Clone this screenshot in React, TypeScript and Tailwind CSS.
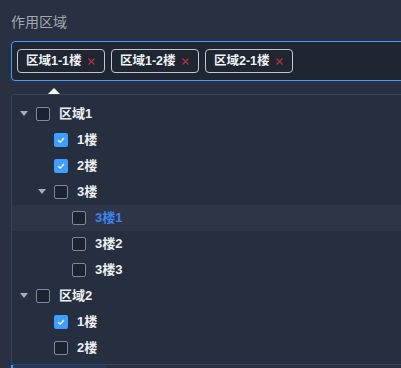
import { useState } from "react";

type Node = {
  label: string;
  level: number;
  caret?: boolean;
  checked?: boolean;
  active?: boolean;
};

const tags = ["区域1-1楼", "区域1-2楼", "区域2-1楼"];

const nodes: Node[] = [
  { label: "区域1", level: 0, caret: true },
  { label: "1楼", level: 1, checked: true },
  { label: "2楼", level: 1, checked: true },
  { label: "3楼", level: 1, caret: true },
  { label: "3楼1", level: 2, active: true },
  { label: "3楼2", level: 2 },
  { label: "3楼3", level: 2 },
  { label: "区域2", level: 0, caret: true },
  { label: "1楼", level: 1, checked: true },
  { label: "2楼", level: 1 },
];

const Checkbox = ({ checked }: { checked?: boolean }) => {
  if (checked) {
    return (
      <span className="w-[14px] h-[14px] rounded-[2px] bg-[#409eff] flex items-center justify-center shrink-0">
        <svg width="10" height="10" viewBox="0 0 10 10">
          <path d="M2 5.2 L4.2 7.2 L8 3" fill="none" stroke="#fff" strokeWidth="1.2" />
        </svg>
      </span>
    );
  }
  return (
    <span className="block w-[14px] h-[14px] rounded-[2px] border border-[#7d889a] bg-[#1c2330] shrink-0" />
  );
};

const TreeRow = ({ node }: { node: Node }) => {
  const indent = ["pl-[6px]", "pl-[24px]", "pl-[42px]"][node.level];
  return (
    <div
      className={`h-[26px] flex items-center ${indent} ${
        node.active ? "bg-[#2e3547]" : ""
      }`}
    >
      <span className="w-[12px] flex items-center justify-center shrink-0">
        {node.caret && (
          <svg width="8" height="6" viewBox="0 0 8 6">
            <path d="M0 0 L8 0 L4 5 Z" fill="#a8aeb8" />
          </svg>
        )}
      </span>
      <span className="ml-[6px] flex">
        <Checkbox checked={node.checked} />
      </span>
      <span
        className={`ml-[9px] text-[13px] font-semibold ${
          node.active ? "text-[#3b82f0]" : "text-[#eef0f3]"
        }`}
      >
        {node.label}
      </span>
    </div>
  );
};

export default function App() {
  const [open] = useState(true);
  return (
    <div
      className="w-[401px] h-[368px] overflow-hidden bg-[#283042] relative"
      style={{ fontFamily: '"Liberation Sans", "Noto Sans CJK SC", sans-serif' }}
    >
      <div className="pl-[11px] pt-[12px]">
        <div className="text-[14px] text-[#a3a9b3] leading-[20px]">作用区域</div>
        <div className="mt-[9px] -mr-[20px] h-[40px] rounded-[4px] border border-[#409eff] bg-[#1f2632] flex items-center gap-[6px] pl-[5px]">
          {tags.map((t) => (
            <span
              key={t}
              className="h-[24px] w-[88px] rounded-[4px] border border-[#c2c6cd] flex items-center pl-[8px] text-[12.5px] text-[#f0f2f5] font-semibold"
            >
              {t}
              <svg className="ml-auto mr-[9px]" width="7" height="7" viewBox="0 0 7 7">
                <path d="M0.5 0.5 L6.5 6.5 M6.5 0.5 L0.5 6.5" stroke="#c0303a" strokeWidth="1.1" />
              </svg>
            </span>
          ))}
        </div>
        <button className="mt-[284px] h-[24px] w-[95px] border-l-2 border-[#409eff] bg-[#22395a] text-white text-[13px] font-semibold flex items-start pt-[1px] pl-[14px]">
          + 数据导入
        </button>
      </div>

      {open && (
        <div className="absolute left-[11px] top-[94px] -right-[4px] h-[271px] border border-[#37445a] rounded-[3px] bg-[#262f40] pt-[6px]">
          <div className="absolute -top-[7px] left-[36px] w-0 h-0 border-l-[6px] border-r-[6px] border-b-[6px] border-l-transparent border-r-transparent border-b-white" />
          {nodes.map((n, i) => (
            <TreeRow key={i} node={n} />
          ))}
        </div>
      )}
    </div>
  );
}
